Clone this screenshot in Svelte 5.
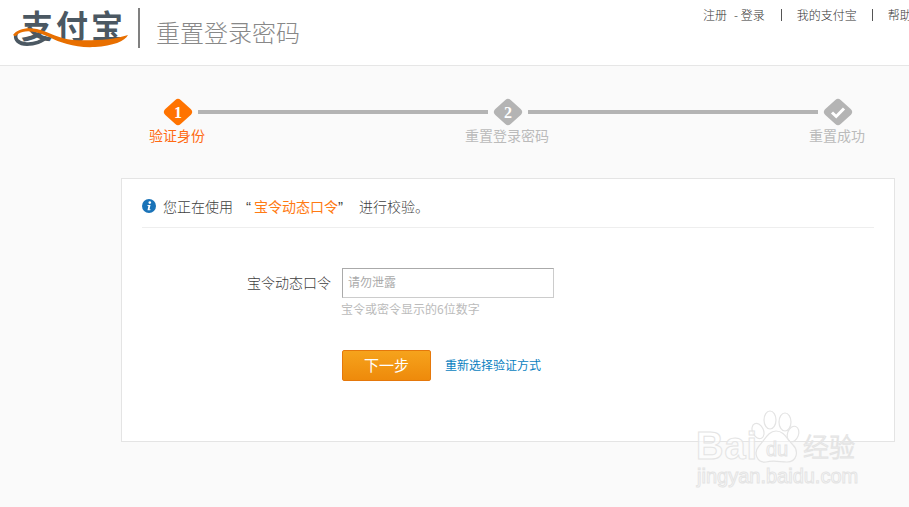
<script>
  const steps = ['验证身份', '重置登录密码', '重置成功'];
</script>

<div class="page">
  <header class="header">
    <div class="logo">
      <span class="logo-text">支付宝</span>
      <svg class="swoosh" viewBox="0 0 116 22" aria-hidden="true">
        <path d="M1 9C0 15 5 20 14 20C22 20 30 17 36 12L32 10C26 15 19 17 12 16C6 15 3 12 5 8Z" fill="#4b5862"/>
        <path d="M0 9C4 3 14 1 24 3C36 6 46 13 60 14C78 15 100 14 115 9C112 15 100 20 82 21C62 22 48 17 36 11C24 5 12 3 5 8C3 10 2 11 0 9Z" fill="#e86f00"/>
      </svg>
    </div>
    <div class="logo-rule"></div>
    <div class="page-title">重置登录密码</div>
    <nav class="nav">
      <span class="nav-reg">注册</span>
      <span class="nav-login">- 登录</span>
      <i></i>
      <span>我的支付宝</span>
      <i></i>
      <span>帮助中心</span>
    </nav>
  </header>

  <section class="steps">
    <div class="track">
      <svg class="diamond" viewBox="0 0 30 28"><polygon points="15,5 25,14 15,23 5,14" fill="#ff7300" stroke="#ff7300" stroke-width="8" stroke-linejoin="round"/><text x="15" y="19.5" class="num">1</text></svg>
      <div class="line"></div>
      <svg class="diamond" viewBox="0 0 30 28"><polygon points="15,5 25,14 15,23 5,14" fill="#b4b4b4" stroke="#b4b4b4" stroke-width="8" stroke-linejoin="round"/><text x="15" y="19.5" class="num">2</text></svg>
      <div class="line"></div>
      <svg class="diamond" viewBox="0 0 30 28"><polygon points="15,5 25,14 15,23 5,14" fill="#b4b4b4" stroke="#b4b4b4" stroke-width="8" stroke-linejoin="round"/><path d="M9 14.5L13.2 18.5L21 10.5" fill="none" stroke="#fff" stroke-width="3"/></svg>
    </div>
    <div class="labels">
      {#each steps as s, i}
        <span class:active={i === 0}>{s}</span>
      {/each}
    </div>
  </section>

  <main class="card">
    <div class="notice">
      <svg class="info" viewBox="0 0 14 14"><circle cx="7" cy="7" r="7" fill="#1a73b8"/><circle cx="7.8" cy="3.6" r="1.3" fill="#fff"/><path d="M5.6 6H8.5L7.5 10.3H8.6L8.3 11.2H5.5L6.4 6.9H5.4Z" fill="#fff"/></svg>
      <span class="msg">您正在使用</span>
      <span class="q-open">“</span><em>宝令动态口令</em><span class="q-close">”</span>
      <span class="msg">进行校验。</span>
    </div>
    <form class="form">
      <div class="row">
        <label class="label" for="code">宝令动态口令</label>
        <input id="code" class="input" placeholder="请勿泄露" />
      </div>
      <div class="hint">宝令或密令显示的6位数字</div>
      <div class="actions">
        <button type="button" class="next"><span>下一步</span></button>
        <a href="#top" class="link">重新选择验证方式</a>
      </div>
    </form>
  </main>

  <div class="watermark" aria-hidden="true">
    <svg class="paw" viewBox="0 0 60 62">
      <g fill="#fff" fill-opacity=".4" stroke="#e4e4e4" stroke-width="1.2">
        <ellipse cx="8" cy="23" rx="5.5" ry="8" transform="rotate(-25 8 23)"/>
        <ellipse cx="20" cy="12" rx="6" ry="9"/>
        <ellipse cx="35" cy="14" rx="6" ry="9"/>
        <ellipse cx="43" cy="26" rx="5.5" ry="8" transform="rotate(20 43 26)"/>
        <path d="M26 23C34 23 37 31 43 37C49 43 47 54 37 54C30 54 24 52 16 54C7 55 3 45 9 38C15 32 18 23 26 23Z"/>
      </g>
    </svg>
    <span class="wm-bai">Bai</span>
    <span class="wm-du">du</span>
    <span class="wm-cn">经验</span>
    <span class="wm-url">jingyan.baidu.com</span>
  </div>
</div>

<style>
  :global(body) {
    margin: 0;
    background: #fafafa;
  }
  .page {
    position: relative;
    width: 909px;
    height: 507px;
    overflow: hidden;
    background: #fafafa;
    font-family: "Noto Sans CJK SC", "Liberation Sans", sans-serif;
    font-weight: 300;
    color: #404040;
  }
  .header {
    box-sizing: border-box;
    height: 66px;
    display: flex;
    align-items: flex-start;
    background: #fff;
    border-bottom: 1px solid #e6e6e6;
  }
  .logo {
    position: relative;
    width: 116px;
    height: 48px;
    margin: 8px 0 0 13px;
    flex: none;
  }
  .logo-text {
    display: block;
    margin-left: 8px;
    font-size: 32px;
    line-height: 32px;
    font-weight: 700;
    color: #4b5862;
    white-space: nowrap;
    letter-spacing: 3px;
  }
  .swoosh {
    position: absolute;
    left: 0;
    top: 18px;
    width: 116px;
    height: 22px;
  }
  .logo-rule {
    width: 2px;
    height: 40px;
    margin: 8px 0 0 9px;
    background: #808080;
    flex: none;
  }
  .page-title {
    margin: 14px 0 0 16px;
    font-size: 24px;
    line-height: 36px;
    color: #888;
    white-space: nowrap;
    flex: none;
  }
  .nav {
    display: flex;
    align-items: center;
    margin: 7px 0 0 403px;
    font-size: 12px;
    line-height: 16px;
    color: #333;
    white-space: nowrap;
    flex: none;
  }
  .nav-reg {
    margin-right: 7px;
  }
  .nav-login {
    margin-right: 1px;
  }
  .nav i {
    width: 1px;
    height: 12px;
    margin: 0 15px;
    background: #555;
  }
  .steps {
    margin: 32px 0 0 136px;
    width: 744px;
  }
  .track {
    display: flex;
    align-items: center;
    margin: 0 27px;
    height: 28px;
  }
  .diamond {
    width: 30px;
    height: 28px;
    flex: none;
  }
  .num {
    fill: #fff;
    font: 700 16px "Liberation Serif", serif;
    text-anchor: middle;
  }
  .line {
    flex: 1;
    height: 4px;
    margin: 0 5px;
    background: #b4b4b4;
  }
  .labels {
    display: flex;
    justify-content: space-between;
    margin: -1px 1px 0 -1px;
    font-size: 14px;
    line-height: 20px;
    font-weight: 400;
    color: #bbb;
  }
  .labels span {
    width: 84px;
    text-align: center;
  }
  .labels .active {
    color: #ff6a13;
  }
  .card {
    box-sizing: border-box;
    width: 774px;
    height: 264px;
    margin: 33px 0 0 121px;
    padding: 0 20px;
    background: #fff;
    border: 1px solid #e4e4e4;
  }
  .notice {
    display: flex;
    align-items: center;
    height: 49px;
    padding-top: 6px;
    box-sizing: border-box;
    border-bottom: 1px solid #eee;
    font-size: 14px;
    white-space: nowrap;
  }
  .info {
    width: 14px;
    height: 14px;
    margin-right: 7px;
    flex: none;
  }
  .q-open,
  .q-close {
    width: 8px;
    font-family: "Liberation Sans", sans-serif;
    font-size: 15px;
  }
  .q-open {
    margin-left: 13px;
  }
  .q-close {
    margin-right: 13px;
  }
  .notice em {
    font-style: normal;
    font-weight: 400;
    color: #ff7a13;
  }
  .form {
    padding: 40px 0 0 200px;
  }
  .row {
    position: relative;
    display: flex;
  }
  .label {
    position: absolute;
    right: calc(100% + 11px);
    top: 0;
    font-size: 14px;
    line-height: 28px;
    white-space: nowrap;
  }
  .input {
    box-sizing: border-box;
    width: 212px;
    height: 30px;
    padding: 0 5px 3px;
    border: 1px solid #ccc;
    border-top-color: #aaa;
    border-left-color: #aaa;
    border-radius: 0;
    outline: 0;
    font: 400 12px "Noto Sans CJK SC", sans-serif;
    background: #fff;
  }
  .input::placeholder {
    color: #aaa;
    opacity: 1;
  }
  .hint {
    margin: 2px 0 0 -1px;
    font-size: 12px;
    line-height: 18px;
    font-weight: 400;
    color: #bbb;
  }
  .actions {
    display: flex;
    align-items: center;
    gap: 14px;
    margin-top: 32px;
  }
  .next {
    box-sizing: border-box;
    width: 89px;
    height: 31px;
    padding: 0 0 3px;
    border: 1px solid #e5780b;
    border-radius: 2px;
    background: linear-gradient(#f6a31c, #ee8a0b);
    color: #fff;
    font: 400 15px "Noto Sans CJK SC", sans-serif;
  }
  .link {
    margin-bottom: 3px;
    font-size: 12px;
    font-weight: 400;
    color: #0a7fbf;
    text-decoration: none;
    white-space: nowrap;
  }
  .watermark {
    position: absolute;
    left: 0;
    top: 0;
    width: 909px;
    height: 507px;
    pointer-events: none;
  }
  .watermark span {
    position: absolute;
    color: rgba(255, 255, 255, .6);
    -webkit-text-stroke: 1px #e4e4e4;
    font-family: "Liberation Sans", sans-serif;
    white-space: nowrap;
  }
  .paw {
    position: absolute;
    left: 750px;
    top: 408px;
    width: 60px;
    height: 62px;
  }
  .wm-bai {
    left: 696px;
    top: 426px;
    font-size: 38px;
    line-height: 40px;
    font-weight: 700;
    letter-spacing: 1px;
  }
  .wm-du {
    left: 766px;
    top: 437px;
    font-size: 20px;
    line-height: 24px;
  }
  .watermark .wm-cn {
    left: 803px;
    top: 430px;
    font-size: 26px;
    line-height: 32px;
    font-family: "Noto Sans CJK SC", sans-serif;
  }
  .wm-url {
    left: 697px;
    top: 464px;
    font-size: 20px;
    line-height: 24px;
  }
</style>
